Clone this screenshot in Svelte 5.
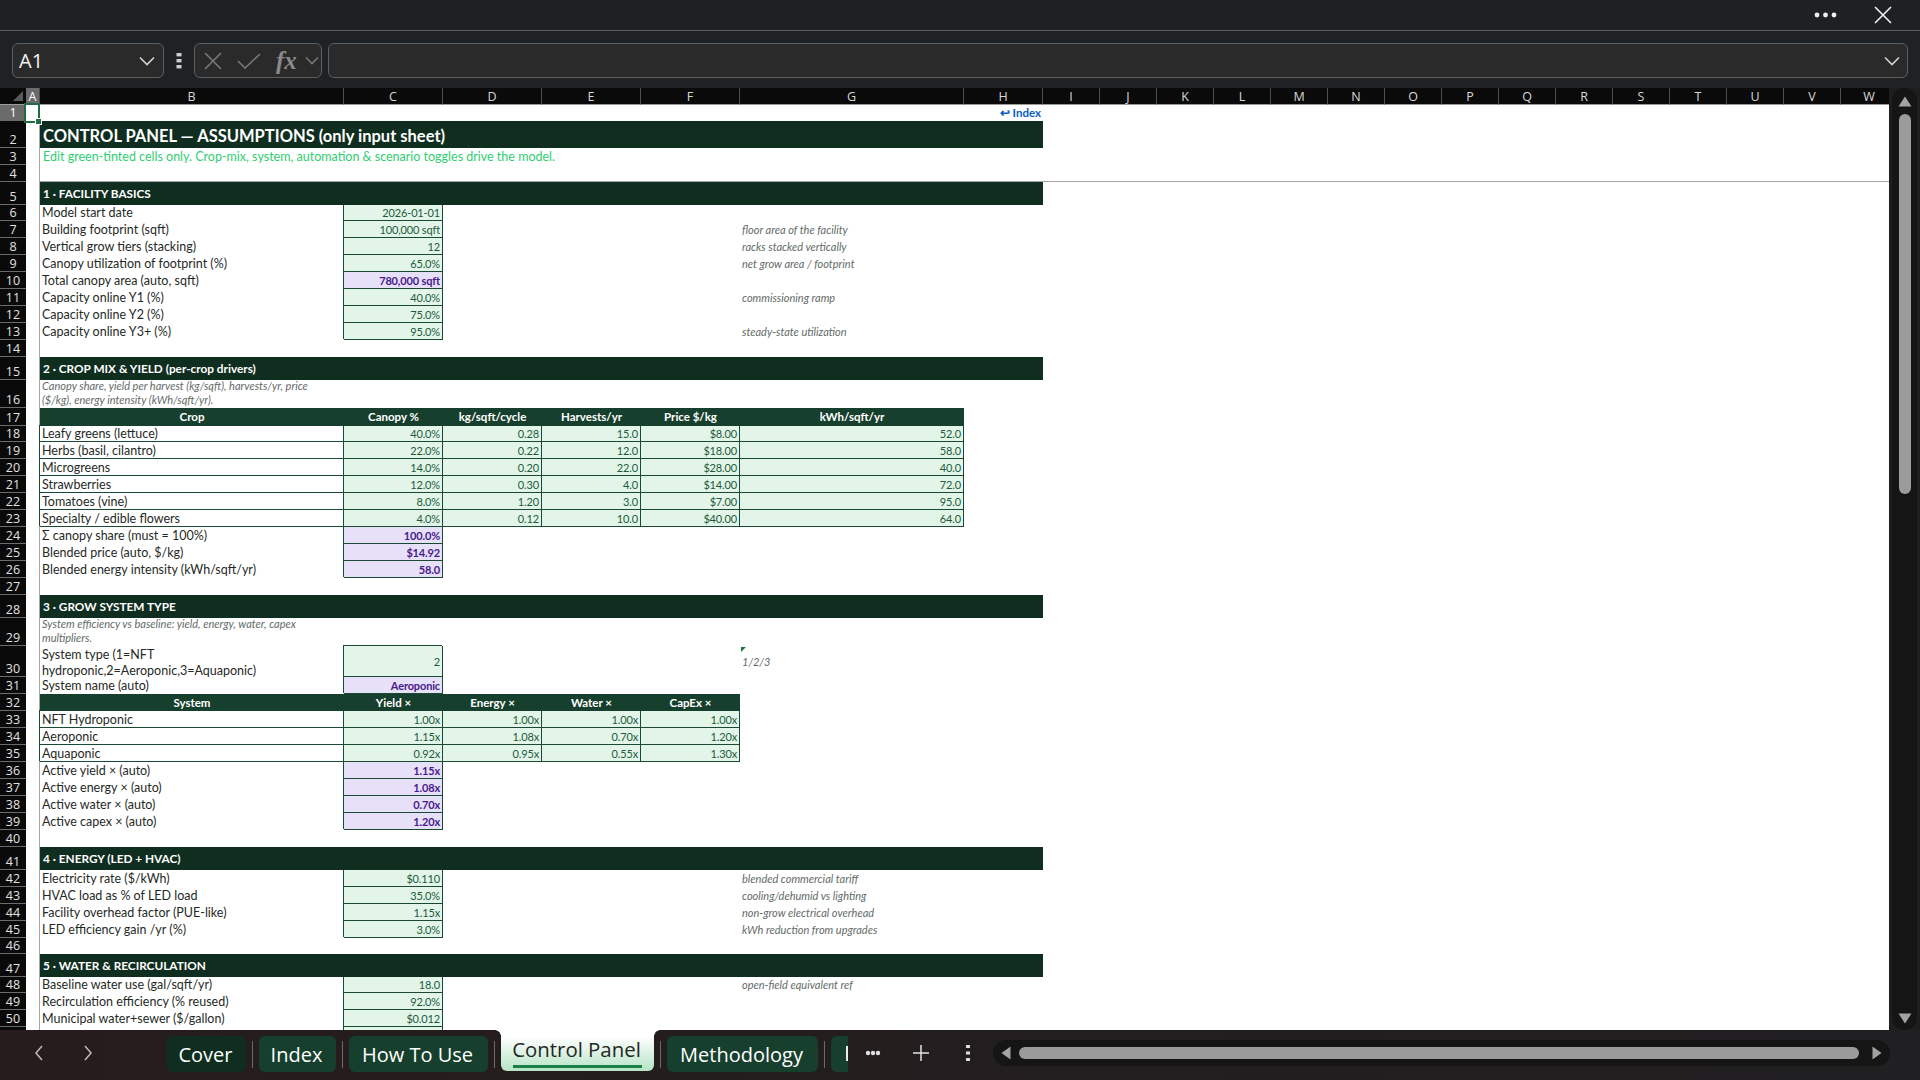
<script>
  const colLetters = "ABCDEFGHIJKLMNOPQRSTUVW".split("");
  const colIndex = (c) => colLetters.indexOf(c) + 2;

  const lbl = (text) => ({ c: "B", text, cls: "label" });
  const inp = (c, text) => ({ c, text, cls: "num input box" });
  const auto = (c, text) => ({ c, text, cls: "num auto box" });
  const note = (text) => ({ c: "G", text, cls: "note" });
  const banner = (text) => ({ c: "B", to: "H", text, cls: "banner" });
  const head = (c, text) => ({ c, text, cls: "thead" });

  const basic = (label, val, n) => {
    const cells = [lbl(label), inp("C", val)];
    if (n) cells.push(note(n));
    return cells;
  };
  const autoRow = (label, val) => [lbl(label), auto("C", val)];
  const tableRow = (label, vals) => [
    { c: "B", text: label, cls: "label box" },
    ...vals.map((v, i) => inp("CDEFG"[i], v)),
  ];

  // [height, cells] for rows 1..51
  const rows = [
    [16, [{ c: "H", text: "↩ Index", cls: "link" }]],
    [27, [{ c: "B", to: "H", text: "CONTROL PANEL — ASSUMPTIONS (only input sheet)", cls: "banner title" }]],
    [17, [{ c: "B", to: "H", text: "Edit green-tinted cells only. Crop-mix, system, automation & scenario toggles drive the model.", cls: "subtitle" }]],
    [17, [{ c: "B", to: "W", text: "", cls: "freeze" }]],
    [23, [banner("1 · FACILITY BASICS")]],
    [16, basic("Model start date", "2026-01-01")],
    [17, basic("Building footprint (sqft)", "100,000 sqft", "floor area of the facility")],
    [17, basic("Vertical grow tiers (stacking)", "12", "racks stacked vertically")],
    [17, basic("Canopy utilization of footprint (%)", "65.0%", "net grow area / footprint")],
    [17, autoRow("Total canopy area (auto, sqft)", "780,000 sqft")],
    [17, basic("Capacity online Y1 (%)", "40.0%", "commissioning ramp")],
    [17, basic("Capacity online Y2 (%)", "75.0%")],
    [17, basic("Capacity online Y3+ (%)", "95.0%", "steady-state utilization")],
    [17, []],
    [23, [banner("2 · CROP MIX & YIELD (per-crop drivers)")]],
    [28, [{ c: "B", text: "Canopy share, yield per harvest (kg/sqft), harvests/yr, price ($/kg), energy intensity (kWh/sqft/yr).", cls: "note wrap" }]],
    [18, [head("B", "Crop"), head("C", "Canopy %"), head("D", "kg/sqft/cycle"), head("E", "Harvests/yr"), head("F", "Price $/kg"), head("G", "kWh/sqft/yr")]],
    [16, tableRow("Leafy greens (lettuce)", ["40.0%", "0.28", "15.0", "$8.00", "52.0"])],
    [17, tableRow("Herbs (basil, cilantro)", ["22.0%", "0.22", "12.0", "$18.00", "58.0"])],
    [17, tableRow("Microgreens", ["14.0%", "0.20", "22.0", "$28.00", "40.0"])],
    [17, tableRow("Strawberries", ["12.0%", "0.30", "4.0", "$14.00", "72.0"])],
    [17, tableRow("Tomatoes (vine)", ["8.0%", "1.20", "3.0", "$7.00", "95.0"])],
    [17, tableRow("Specialty / edible flowers", ["4.0%", "0.12", "10.0", "$40.00", "64.0"])],
    [17, autoRow("Σ canopy share (must = 100%)", "100.0%")],
    [17, autoRow("Blended price (auto, $/kg)", "$14.92")],
    [17, autoRow("Blended energy intensity (kWh/sqft/yr)", "58.0")],
    [17, []],
    [23, [banner("3 · GROW SYSTEM TYPE")]],
    [28, [{ c: "B", text: "System efficiency vs baseline: yield, energy, water, capex multipliers.", cls: "note wrap" }]],
    [31, [
      { c: "B", text: "System type (1=NFT hydroponic,2=Aeroponic,3=Aquaponic)", cls: "label wrap" },
      inp("C", "2"),
      { c: "G", text: "1/2/3", cls: "note commented" },
    ]],
    [17, autoRow("System name (auto)", "Aeroponic")],
    [17, [head("B", "System"), head("C", "Yield ×"), head("D", "Energy ×"), head("E", "Water ×"), head("F", "CapEx ×")]],
    [17, tableRow("NFT Hydroponic", ["1.00x", "1.00x", "1.00x", "1.00x"])],
    [17, tableRow("Aeroponic", ["1.15x", "1.08x", "0.70x", "1.20x"])],
    [17, tableRow("Aquaponic", ["0.92x", "0.95x", "0.55x", "1.30x"])],
    [17, autoRow("Active yield × (auto)", "1.15x")],
    [17, autoRow("Active energy × (auto)", "1.08x")],
    [17, autoRow("Active water × (auto)", "0.70x")],
    [17, autoRow("Active capex × (auto)", "1.20x")],
    [17, []],
    [23, [banner("4 · ENERGY (LED + HVAC)")]],
    [17, basic("Electricity rate ($/kWh)", "$0.110", "blended commercial tariff")],
    [17, basic("HVAC load as % of LED load", "35.0%", "cooling/dehumid vs lighting")],
    [17, basic("Facility overhead factor (PUE-like)", "1.15x", "non-grow electrical overhead")],
    [17, basic("LED efficiency gain /yr (%)", "3.0%", "kWh reduction from upgrades")],
    [16, []],
    [23, [banner("5 · WATER & RECIRCULATION")]],
    [16, basic("Baseline water use (gal/sqft/yr)", "18.0", "open-field equivalent ref")],
    [17, basic("Recirculation efficiency (% reused)", "92.0%")],
    [17, basic("Municipal water+sewer ($/gallon)", "$0.012")],
    [17, [inp("C", "")]],
  ];

  const template = "17px " + rows.map((r) => r[0] + "px").join(" ");

  const tabs = [
    { name: "Cover", w: 79, cls: "dark" },
    { name: "Index", w: 77 },
    { name: "How To Use", w: 139 },
    { name: "Control Panel", w: 153, cls: "active" },
    { name: "Methodology", w: 151 },
  ];
</script>

<div class="window">
  <div class="titlebar">
    <svg class="more" width="23" height="6" viewBox="0 0 23 6"><circle cx="3" cy="3" r="2.4" /><circle cx="11.5" cy="3" r="2.4" /><circle cx="20" cy="3" r="2.4" /></svg>
    <svg class="close" width="18" height="18" viewBox="0 0 18 18"><path d="M1 1L17 17M17 1L1 17" /></svg>
  </div>

  <div class="formula">
    <div class="namebox">
      <span>A1</span>
      <svg width="16" height="10" viewBox="0 0 16 10"><path d="M1 1.5L8 8.5L15 1.5" /></svg>
    </div>
    <svg class="kebab" width="6" height="16" viewBox="0 0 6 16"><rect x="0.5" y="0" width="5" height="3.4" /><rect x="0.5" y="6" width="5" height="3.4" /><rect x="0.5" y="12" width="5" height="3.4" /></svg>
    <div class="fnbox">
      <svg width="18" height="18" viewBox="0 0 18 18"><path d="M1 1L17 17M17 1L1 17" /></svg>
      <svg class="check" width="24" height="16" viewBox="0 0 24 16"><path d="M1 8L8 15L23 1" /></svg>
      <span class="fx">fx</span>
      <svg class="fx-chev" width="14" height="9" viewBox="0 0 14 9"><path d="M1 1.5L7 7.5L13 1.5" /></svg>
    </div>
    <div class="input-line">
      <svg width="16" height="10" viewBox="0 0 16 10"><path d="M1 1.5L8 8.5L15 1.5" /></svg>
    </div>
  </div>

  <div class="workspace">
    <div class="sheet" style="grid-template-rows: {template}">
      <div class="corner"><span class="triangle"></span></div>
      {#each colLetters as letter}
        <div class="colhead" class:current={letter === "A"}>{letter}</div>
      {/each}

      {#each rows as row, i}
        <div class="rowhead" class:current={i === 0} style="grid-row: {i + 2}">{i < 50 ? i + 1 : ""}</div>
        <div class="gutter" style="grid-row: {i + 2}">
          {#if i === 0}
            <span class="selection"></span>
          {/if}
        </div>
        {#each row[1] as cell}
          <div
            class="cell {cell.cls}"
            style="grid-row: {i + 2}; grid-column: {colIndex(cell.c)} / {colIndex(cell.to || cell.c) + 1}"
          >
            <span>{cell.text}</span>
          </div>
        {/each}
      {/each}
    </div>

    <div class="vscroll">
      <svg width="14" height="11" viewBox="0 0 14 11"><path d="M7 0.5L13.5 10.5H0.5Z" /></svg>
      <div class="vthumb"></div>
      <svg class="down" width="14" height="11" viewBox="0 0 14 11"><path d="M7 10.5L13.5 0.5H0.5Z" /></svg>
    </div>
  </div>

  <div class="tabbar">
    <div class="nav">
      <svg width="10" height="16" viewBox="0 0 10 16"><path d="M8 1L2 8L8 15" /></svg>
      <svg width="10" height="16" viewBox="0 0 10 16"><path d="M2 1L8 8L2 15" /></svg>
    </div>
    <div class="tabs">
      {#each tabs as tab}
        <div class="tab {tab.cls || ''}" style="width: {tab.w}px"><span>{tab.name}</span></div>
        <i class="sep"></i>
      {/each}
      <div class="tab clipped"></div>
    </div>
    <svg class="tab-more" width="16" height="6" viewBox="0 0 16 6"><circle cx="3" cy="3" r="2.2" /><circle cx="8" cy="3" r="2.2" /><circle cx="13" cy="3" r="2.2" /></svg>
    <svg class="tab-add" width="18" height="18" viewBox="0 0 18 18"><path d="M9 1V17M1 9H17" /></svg>
    <svg class="tab-kebab" width="4" height="16" viewBox="0 0 4 16"><rect width="4" height="3" /><rect y="6.5" width="4" height="3" /><rect y="13" width="4" height="3" /></svg>
    <div class="hscroll">
      <svg width="10" height="14" viewBox="0 0 10 14"><path d="M0.5 7L9.5 0.5V13.5Z" /></svg>
      <div class="hthumb"></div>
      <svg width="10" height="14" viewBox="0 0 10 14"><path d="M9.5 7L0.5 0.5V13.5Z" /></svg>
    </div>
  </div>
</div>

<style>
  :global(body) {
    margin: 0;
    background: #1e2124;
  }

  .window {
    width: 1920px;
    height: 1080px;
    display: flex;
    flex-direction: column;
    overflow: hidden;
    font-family: "Lato", "Liberation Sans", sans-serif;
    background: #1e2124;
  }

  .titlebar {
    height: 31px;
    flex: none;
    box-sizing: border-box;
    border-bottom: 1px solid #5c5c5c;
    display: flex;
    align-items: center;
    justify-content: flex-end;
    padding-right: 28px;
    gap: 37px;
  }
  .more {
    fill: #eee;
  }
  .close {
    fill: none;
    stroke: #f2f2f2;
    stroke-width: 1.6;
  }

  .formula {
    height: 57px;
    flex: none;
    display: flex;
    align-items: center;
    box-sizing: border-box;
    padding: 2px 12px 0 12px;
    background: #1f2225;
  }
  .namebox,
  .fnbox,
  .input-line {
    height: 35px;
    box-sizing: border-box;
    border: 1px solid #5e5e5e;
    border-radius: 6px;
    background: #2a2a2a;
    display: flex;
    align-items: center;
  }
  .namebox {
    width: 152px;
    justify-content: space-between;
    padding: 0 8px 0 6px;
    color: #f4f4f4;
    font: 20px "Open Sans", sans-serif;
  }
  svg path {
    fill: none;
  }
  .namebox svg path,
  .input-line svg path {
    stroke: #d4d4d4;
    stroke-width: 1.6;
  }
  .kebab {
    fill: #cfcfcf;
    margin: 0 12px;
    flex: none;
  }
  .fnbox {
    width: 128px;
    padding-left: 9px;
    margin-right: 6px;
    color: #7b7b7b;
  }
  .fnbox svg path {
    stroke: #787878;
    stroke-width: 1.6;
  }
  .check {
    margin-left: 15px;
  }
  .fx {
    margin-left: 15px;
    width: 21px;
    font: italic 700 25px "Liberation Serif", serif;
    color: #8a8a8a;
  }
  .fx-chev {
    margin-left: 8px;
  }
  .input-line {
    flex: 1;
    justify-content: flex-end;
    padding-right: 7px;
  }

  .workspace {
    height: 942px;
    flex: none;
    display: flex;
    background: #1e1e20;
  }

  .sheet {
    width: 1889px;
    flex: none;
    display: grid;
    grid-template-columns: 26px 14px 304px 99px 99px 99px 99px 224px 79px repeat(15, 57px);
    align-content: start;
    background: #fff;
    overflow: hidden;
    position: relative;
    font-size: 12.5px;
  }

  .corner {
    background: #0a0a0a;
    border-bottom: 1px solid #9c9c9c;
    position: relative;
  }
  .triangle {
    position: absolute;
    right: 3px;
    bottom: 3px;
    width: 0;
    height: 0;
    border-left: 10px solid transparent;
    border-bottom: 10px solid #5a5a5a;
  }
  .colhead {
    background: #0a0a0a;
    color: #d8d8d8;
    border-bottom: 1px solid #9c9c9c;
    border-right: 1px solid #4d4d4d;
    font: 12.5px "Open Sans", sans-serif;
    line-height: 17px;
    text-align: center;
    box-sizing: border-box;
    overflow: hidden;
  }
  .colhead.current {
    background: #6b6b6b;
    color: #fff;
  }
  .rowhead {
    grid-column: 1;
    background: #0a0a0a;
    color: #e2e2e2;
    border-bottom: 1px solid #6b6b6b;
    box-sizing: border-box;
    font: 12.5px "Open Sans", sans-serif;
    line-height: 14px;
    display: flex;
    align-items: flex-end;
    justify-content: center;
    overflow: hidden;
  }
  .rowhead.current {
    background: #6b6b6b;
    color: #fff;
  }
  .gutter {
    grid-column: 2;
    border-right: 1px solid #a6a6a6;
    box-sizing: border-box;
    position: relative;
  }
  .selection {
    position: absolute;
    left: -2px;
    right: -1px;
    top: -2px;
    bottom: -2px;
    border: 2px solid #1e6b44;
    z-index: 3;
  }
  .selection::after {
    content: "";
    position: absolute;
    right: -4px;
    bottom: -4px;
    width: 5px;
    height: 5px;
    background: #1e6b44;
    border: 1px solid #fff;
  }

  .cell {
    min-width: 0;
    box-sizing: border-box;
    display: flex;
    align-items: center;
    padding: 0 2px 1px;
    white-space: nowrap;
    color: #1d2b26;
    position: relative;
  }
  .wrap {
    white-space: normal;
  }
  .label {
    color: #1f2a26;
  }
  .box {
    padding-bottom: 0;
    border-right: 1px solid #1a4a34;
    border-bottom: 1px solid #1a4a34;
    box-shadow: -1px -1px 0 0 #1a4a34;
  }
  .num {
    justify-content: flex-end;
    font-size: 11px;
    letter-spacing: -0.15px;
  }
  .input {
    background: #e3f5e9;
    color: #1b5b3a;
  }
  .auto {
    background: #e6e0f9;
    color: #4a1a8c;
    font-weight: 700;
  }
  .note {
    color: #636b68;
    font-style: italic;
    font-size: 11px;
  }
  .note.wrap {
    line-height: 14px;
    align-items: flex-end;
    padding-right: 24px;
  }
  .label.wrap {
    line-height: 16px;
    align-items: flex-start;
    padding-top: 1px;
  }
  .commented::before {
    content: "";
    position: absolute;
    left: 1px;
    top: 1px;
    border-top: 5px solid #1b7a3d;
    border-right: 5px solid transparent;
  }
  .banner {
    background: #0f2e20;
    color: #fff;
    font-weight: 700;
    font-size: 11.8px;
    padding: 0 0 0 3px;
    z-index: 1;
  }
  .title {
    font-size: 16.5px;
    padding-top: 2px;
  }
  .subtitle {
    color: #2fce72;
    padding: 0 0 0 3px;
  }
  .freeze {
    border-bottom: 1px solid #a6a6a6;
  }
  .thead {
    background: #173f2d;
    color: #fff;
    font-weight: 700;
    font-size: 11.5px;
    justify-content: center;
    z-index: 1;
  }
  .link {
    color: #0b5cc4;
    font-weight: 700;
    justify-content: flex-end;
    font-size: 11.5px;
  }

  .vscroll {
    flex: 1;
    display: flex;
    flex-direction: column;
    align-items: center;
    box-sizing: border-box;
    margin: 0 3px 0 3px;
    padding: 8px 0 6px;
    background: #151515;
    border-radius: 12px;
  }
  .vscroll svg path,
  .hscroll svg path {
    fill: #a3a3a3;
  }
  .vthumb {
    width: 12px;
    height: 380px;
    margin-top: 7px;
    border-radius: 6px;
    background: #9b9b9b;
  }
  .down {
    margin-top: auto;
  }

  .tabbar {
    height: 50px;
    flex: none;
    display: flex;
    align-items: flex-start;
    position: relative;
    background: linear-gradient(90deg, #261c1c, #201f21);
    color: #fff;
    font: 20px "Open Sans", sans-serif;
  }
  .nav {
    width: 167px;
    flex: none;
    box-sizing: border-box;
    padding: 15px 0 0 34px;
    display: flex;
    gap: 39px;
  }
  .nav svg path {
    stroke: #bcbcbc;
    stroke-width: 1.5;
  }
  .tabs {
    display: flex;
    align-items: flex-start;
    gap: 6px;
    width: 682px;
    flex: none;
  }
  .tab {
    height: 36px;
    margin-top: 6px;
    padding-right: 2px;
    flex: none;
    box-sizing: border-box;
    border-radius: 6px;
    background: #173f2d;
    display: flex;
    align-items: center;
    justify-content: center;
    white-space: nowrap;
  }
  .tab.dark {
    background: #0f2e20;
  }
  .tab.active {
    height: 41px;
    margin-top: 0;
    border-radius: 0 0 6px 6px;
    background: linear-gradient(180deg, #ffffff 15%, #b6e4c5);
    color: #262626;
    font-size: 20.4px;
    position: relative;
    align-items: flex-start;
    padding-top: 5px;
  }
  .tab.active::after {
    content: "";
    position: absolute;
    left: 12px;
    right: 12px;
    bottom: 3px;
    height: 3px;
    background: #1a7f49;
  }
  .tab.active::before {
    content: "";
    position: absolute;
    top: 0;
    left: -6px;
    right: -6px;
    height: 6px;
    background:
      radial-gradient(circle at 0 100%, transparent 5.5px, #fff 6px) left / 6px 6px no-repeat,
      radial-gradient(circle at 100% 100%, transparent 5.5px, #fff 6px) right / 6px 6px no-repeat;
  }
  .tab.clipped {
    width: 17px;
    padding: 0;
    border-radius: 6px 0 0 6px;
    position: relative;
  }
  .tab.clipped::after {
    content: "";
    position: absolute;
    right: 0;
    top: 10px;
    width: 2px;
    height: 15px;
    background: #e8efe9;
  }
  .sep {
    width: 1px;
    height: 27px;
    margin-top: 11px;
    background: #6d6a6a;
    flex: none;
  }
  .tab-more {
    fill: #e0e0e0;
    margin: 20px 0 0 16px;
    flex: none;
  }
  .tab-add {
    margin: 14px 0 0 31px;
    flex: none;
  }
  .tab-add path {
    stroke: #e4e4e4;
    stroke-width: 1.5;
  }
  .tab-kebab {
    fill: #dcdcdc;
    margin: 15px 0 0 36px;
    flex: none;
  }
  .hscroll {
    width: 897px;
    height: 26px;
    margin: 10px 0 0 23px;
    flex: none;
    box-sizing: border-box;
    padding: 0 8px;
    border-radius: 13px;
    background: #151515;
    display: flex;
    align-items: center;
    gap: 8px;
  }
  .hthumb {
    flex: 1;
    height: 12px;
    margin-right: 5px;
    border-radius: 6px;
    background: #9b9b9b;
  }
</style>
